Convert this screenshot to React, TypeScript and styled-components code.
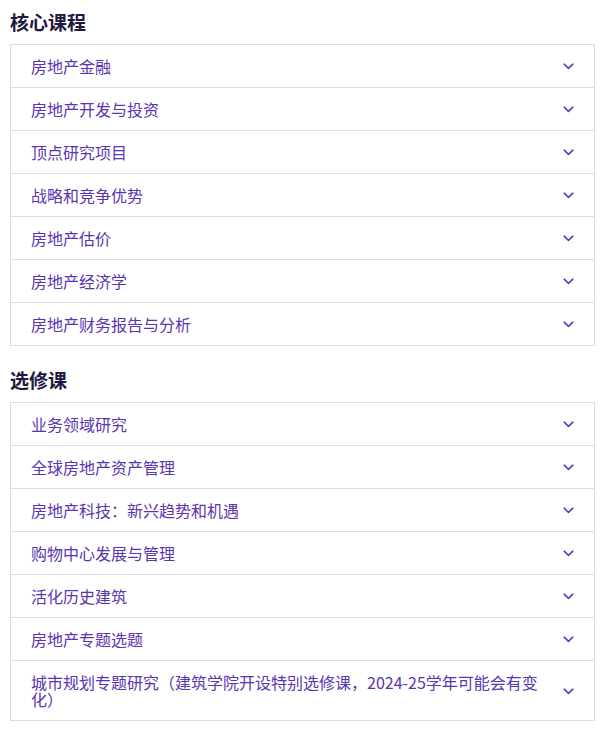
import React from 'react';
import styled, { createGlobalStyle } from 'styled-components';

const sections = [
  {
    title: '核心课程',
    items: [
      '房地产金融',
      '房地产开发与投资',
      '顶点研究项目',
      '战略和竞争优势',
      '房地产估价',
      '房地产经济学',
      '房地产财务报告与分析',
    ],
  },
  {
    title: '选修课',
    items: [
      '业务领域研究',
      '全球房地产资产管理',
      '房地产科技：新兴趋势和机遇',
      '购物中心发展与管理',
      '活化历史建筑',
      '房地产专题选题',
      '城市规划专题研究（建筑学院开设特别选修课，2024-25学年可能会有变化）',
    ],
  },
];

const Chevron = () => (
  <svg width='11' height='7' viewBox='0 0 11 7' fill='none'>
    <path d='M1.2 1.2 L5.5 5.3 L9.8 1.2' stroke='#5a3cc0' strokeWidth='1.6' strokeLinecap='round' strokeLinejoin='round' />
  </svg>
);

const App = () => {
  return (
    <Page>
      <GlobalStyle />
      {sections.map((section) => (
        <Section key={section.title}>
          <Heading>{section.title}</Heading>
          <List>
            {section.items.map((item) => (
              <Row key={item}>
                <Label>{item}</Label>
                <IconBox>
                  <Chevron />
                </IconBox>
              </Row>
            ))}
          </List>
        </Section>
      ))}
    </Page>
  );
};

const GlobalStyle = createGlobalStyle`
  body {
    margin: 0;
    background: #ffffff;
    font-family: 'Noto Sans CJK SC', 'Noto Sans', sans-serif;
  }
`;

const Page = styled.div`
  display: flex;
  flex-direction: column;
  gap: 20px;
  padding: 8px 11px 10px 10px;
`;

const Section = styled.div`
  display: flex;
  flex-direction: column;
  gap: 9px;
`;

const Heading = styled.h2`
  margin: 0;
  font-size: 19px;
  line-height: 27px;
  font-weight: 700;
  color: #221740;
`;

const List = styled.div`
  display: flex;
  flex-direction: column;
  border: 1px solid #dedde6;
`;

const Row = styled.div`
  display: flex;
  align-items: center;
  gap: 16px;
  padding: 13px 20px 12px 20px;
  border-top: 1px solid #dedde6;

  &:first-child {
    border-top: none;
  }
`;

const Label = styled.div`
  flex: 1;
  font-size: 16px;
  line-height: 17px;
  color: #5b35b0;
`;

const IconBox = styled.div`
  width: 12px;
  display: flex;
  justify-content: center;
  align-items: center;
`;

export default App;
